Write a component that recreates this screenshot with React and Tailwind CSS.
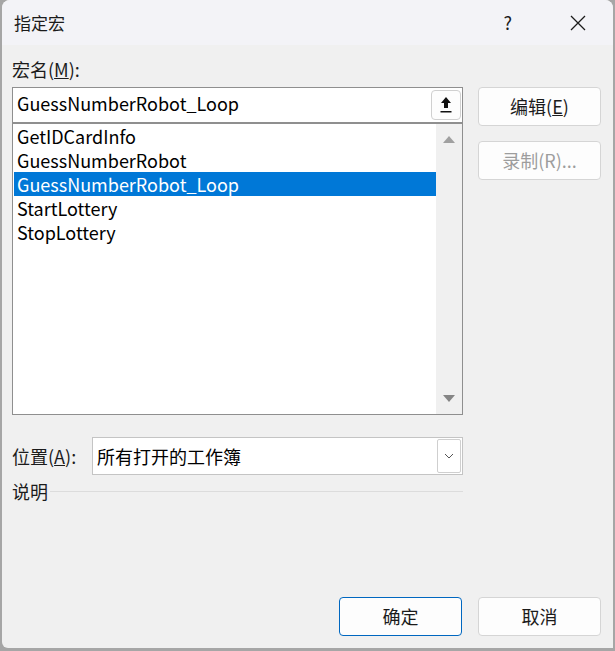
import React from "react";

const items = [
  "GetIDCardInfo",
  "GuessNumberRobot",
  "GuessNumberRobot_Loop",
  "StartLottery",
  "StopLottery",
];

const font = { fontFamily: '"Noto Sans CJK SC", "Noto Sans", sans-serif' };

function Button({ children, primary, disabled }) {
  return (
    <button
      className={`w-[123px] h-[39px] rounded-[4px] bg-[#fdfdfd] text-[18px] flex items-center justify-center ${
        primary ? "border border-[#0067c0]" : "border border-[#d5d5d5]"
      } ${disabled ? "text-[#9d9d9d]" : "text-[#1b1b1b]"}`}
    >
      {children}
    </button>
  );
}

export default function App() {
  return (
    <div className="w-[615px] h-[651px] bg-[#a6a6a6] flex" style={font}>
      <div className="flex-1 ml-[2px] mr-[2px] mb-[3px] rounded-t-[8px] rounded-bl-[6px] overflow-hidden bg-[#f0f0f0] flex flex-col">
        {/* title bar */}
        <div className="h-[45px] bg-[#f3f3f7] flex items-center text-[#1b1b1b]">
          <span className="ml-[12px] text-[17px]">指定宏</span>
          <span className="ml-auto mr-[58px] text-[18px]">?</span>
          <svg width="16" height="16" viewBox="0 0 16 16" className="mr-[27px]">
            <path d="M1 1L15 15M15 1L1 15" stroke="#1b1b1b" strokeWidth="1.3" />
          </svg>
        </div>

        <div className="flex flex-1 pl-[10px] pr-[12px]">
          {/* left column */}
          <div className="w-[451px] flex flex-col">
            <div className="mt-[12px] h-[24px] text-[18px] text-[#1b1b1b] leading-[24px]">
              宏名(<span className="underline underline-offset-1">M</span>):
            </div>
            <div className="mt-[6px] h-[36px] bg-white border border-[#8f8f8f] flex items-center">
              <span className="ml-[4px] text-[18px] leading-[24px] pb-[5px] text-black flex-1">GuessNumberRobot_Loop</span>
              <div className="w-[30px] h-[30px] mr-[1px] border border-[#d0d0d0] rounded-[4px] bg-[#fdfdfd] flex items-center justify-center">
                <svg width="12" height="18" viewBox="0 0 12 18">
                  <path d="M6 1L11 7H8V12H4V7H1Z" fill="#111" />
                  <rect x="0.5" y="15" width="11" height="1.5" fill="#111" />
                </svg>
              </div>
            </div>
            <div className="h-[292px] bg-white border border-[#8f8f8f] flex">
              <div className="flex-1 pl-[1px]">
                {items.map((it, i) => (
                  <div
                    key={it}
                    className={`h-[24px] leading-[24px] pl-[3px] text-[18px] ${
                      i === 2 ? "bg-[#0078d7] text-white" : "text-black"
                    }`}
                  >
                    {it}
                  </div>
                ))}
              </div>
              <div className="w-[26px] bg-[#f0f0f0] flex flex-col items-center justify-between py-[12px]">
                <svg width="12" height="7" viewBox="0 0 12 7">
                  <path d="M6 0L12 7H0Z" fill="#a0a0a0" />
                </svg>
                <svg width="12" height="7" viewBox="0 0 12 7">
                  <path d="M0 0H12L6 7Z" fill="#858585" />
                </svg>
              </div>
            </div>

            <div className="mt-[22px] flex items-center">
              <div className="w-[80px] text-[18px] text-[#1b1b1b]">
                位置(<span className="underline underline-offset-1">A</span>):
              </div>
              <div className="flex-1 h-[38px] bg-white border border-[#c4c4c4] flex items-center">
                <span className="ml-[4px] text-[18px] text-black flex-1">所有打开的工作簿</span>
                <div className="w-[24px] h-[34px] mr-[1px] border border-[#cfcfcf] rounded-[2px] flex items-center justify-center">
                  <svg width="10" height="6" viewBox="0 0 10 6">
                    <path d="M1 1L5 5L9 1" stroke="#555" strokeWidth="1" fill="none" />
                  </svg>
                </div>
              </div>
            </div>

            <div className="mt-[3px] flex items-center">
              <span className="text-[18px] text-[#1b1b1b]">说明</span>
              <div className="flex-1 ml-[2px] h-px bg-[#dcdcdc]"></div>
            </div>

            <div className="flex-1"></div>
            <div className="flex justify-end mb-[12px] mr-[1px]">
              <Button primary>确定</Button>
            </div>
          </div>

          {/* right column */}
          <div className="flex-1 flex flex-col items-end">
            <div className="mt-[42px]">
              <Button>编辑(<span className="underline underline-offset-1">E</span>)</Button>
            </div>
            <div className="mt-[15px]">
              <Button disabled>录制(R)...</Button>
            </div>
            <div className="flex-1"></div>
            <div className="mb-[12px]">
              <Button>取消</Button>
            </div>
          </div>
        </div>
      </div>
    </div>
  );
}
